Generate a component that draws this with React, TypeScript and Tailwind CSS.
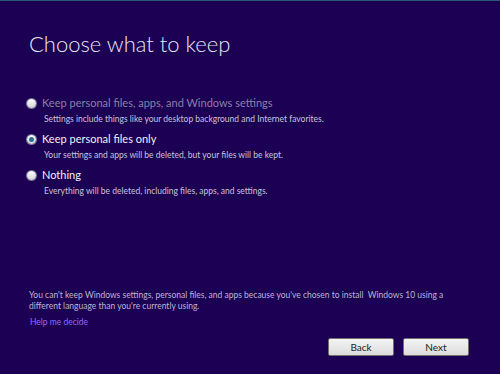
import React from 'react';

type OptionProps = {
  label: string;
  desc: string;
  checked?: boolean;
  disabled?: boolean;
};

function Radio({ checked }: { checked?: boolean }) {
  return (
    <span className="flex h-[9px] w-[9px] shrink-0 items-center justify-center rounded-full bg-gradient-to-b from-white to-[#d4d4d4] shadow-[0_0_0_1px_#7a7a9a]">
      {checked && <span className="h-[5px] w-[5px] rounded-full bg-[#2b6f8f]" />}
    </span>
  );
}

function Option({ label, desc, checked, disabled }: OptionProps) {
  return (
    <div className="flex flex-col">
      <div className="flex items-center gap-[6px] pl-[27px]">
        <Radio checked={checked} />
        <span className={`text-[11px] leading-[16px] ${disabled ? 'text-[#8a80a8]' : 'text-[#f2f2f8]'}`}>
          {label}
        </span>
      </div>
      <div className="mt-[1px] pl-[44px] text-[8.5px] leading-[14px] text-[#c9c4dc]">{desc}</div>
    </div>
  );
}

function Button({ children }: { children: React.ReactNode }) {
  return (
    <button className="h-[18px] w-[66px] rounded-[2px] border border-[#707070] bg-gradient-to-b from-[#f4f4f4] to-[#dcdcdc] text-[10px] leading-none text-[#1a1a1a]">
      {children}
    </button>
  );
}

export default function App() {
  return (
    <div
      className="flex h-[374px] w-[500px] flex-col overflow-hidden border-t border-[#2a5a78] bg-[#1b0053]"
      style={{ fontFamily: 'Lato, "Noto Sans", sans-serif' }}
    >
      <h1 className="pl-[29px] pt-[29px] text-[22px] font-light leading-[28px] text-[#e8e6f2]">
        Choose what to keep
      </h1>

      <div className="mt-[37px] flex flex-col gap-[5px]">
        <Option
          label="Keep personal files, apps, and Windows settings"
          desc="Settings include things like your desktop background and Internet favorites."
          disabled
        />
        <Option
          label="Keep personal files only"
          desc="Your settings and apps will be deleted, but your files will be kept."
          checked
        />
        <Option
          label="Nothing"
          desc="Everything will be deleted, including files, apps, and settings."
        />
      </div>

      <div className="mt-auto pb-[18px]">
        <p className="pl-[29px] pr-[28px] text-[8.5px] leading-[11px] text-[#bdb6d4]">
          You can't keep Windows settings, personal files, and apps because you've chosen to install&nbsp; Windows 10 using a
          different language than you're currently using.
        </p>
        <a className="mt-[4px] block pl-[30px] text-[8.5px] leading-[12px] text-[#8f6cff]">Help me decide</a>
        <div className="mt-[10px] flex justify-end gap-[9px] pr-[31px]">
          <Button>Back</Button>
          <Button>Next</Button>
        </div>
      </div>
    </div>
  );
}
